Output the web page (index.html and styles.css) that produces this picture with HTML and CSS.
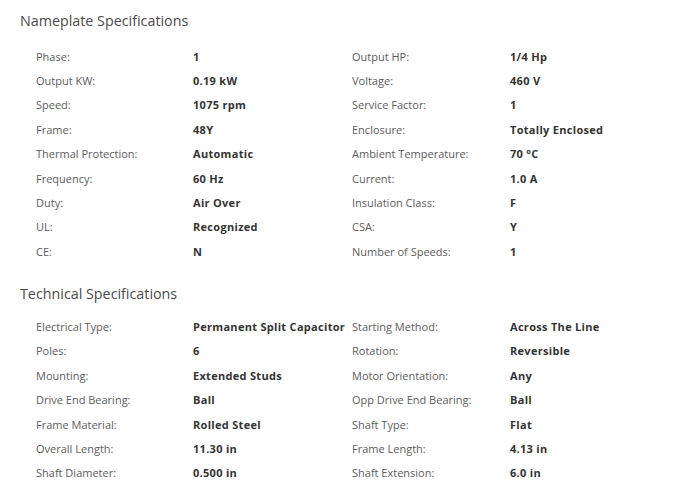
FILE: index.html
```html
<!DOCTYPE html>
<html>
<head>
<meta charset="utf-8">
<link rel="stylesheet" href="styles.css">
</head>
<body>
<div class="page">
  <section class="spec">
    <h2 class="spec-title">Nameplate Specifications</h2>
    <div class="spec-grid">
      <div class="lbl">Phase:</div><div class="val">1</div><div class="lbl">Output HP:</div><div class="val">1/4 Hp</div>
      <div class="lbl">Output KW:</div><div class="val">0.19 kW</div><div class="lbl">Voltage:</div><div class="val">460 V</div>
      <div class="lbl">Speed:</div><div class="val">1075 rpm</div><div class="lbl">Service Factor:</div><div class="val">1</div>
      <div class="lbl">Frame:</div><div class="val">48Y</div><div class="lbl">Enclosure:</div><div class="val">Totally Enclosed</div>
      <div class="lbl">Thermal Protection:</div><div class="val">Automatic</div><div class="lbl">Ambient Temperature:</div><div class="val">70 °C</div>
      <div class="lbl">Frequency:</div><div class="val">60 Hz</div><div class="lbl">Current:</div><div class="val">1.0 A</div>
      <div class="lbl">Duty:</div><div class="val">Air Over</div><div class="lbl">Insulation Class:</div><div class="val">F</div>
      <div class="lbl">UL:</div><div class="val">Recognized</div><div class="lbl">CSA:</div><div class="val">Y</div>
      <div class="lbl">CE:</div><div class="val">N</div><div class="lbl">Number of Speeds:</div><div class="val">1</div>
    </div>
  </section>
  <section class="spec">
    <h2 class="spec-title">Technical Specifications</h2>
    <div class="spec-grid">
      <div class="lbl">Electrical Type:</div><div class="val">Permanent Split Capacitor</div><div class="lbl">Starting Method:</div><div class="val">Across The Line</div>
      <div class="lbl">Poles:</div><div class="val">6</div><div class="lbl">Rotation:</div><div class="val">Reversible</div>
      <div class="lbl">Mounting:</div><div class="val">Extended Studs</div><div class="lbl">Motor Orientation:</div><div class="val">Any</div>
      <div class="lbl">Drive End Bearing:</div><div class="val">Ball</div><div class="lbl">Opp Drive End Bearing:</div><div class="val">Ball</div>
      <div class="lbl">Frame Material:</div><div class="val">Rolled Steel</div><div class="lbl">Shaft Type:</div><div class="val">Flat</div>
      <div class="lbl">Overall Length:</div><div class="val">11.30 in</div><div class="lbl">Frame Length:</div><div class="val">4.13 in</div>
      <div class="lbl">Shaft Diameter:</div><div class="val">0.500 in</div><div class="lbl">Shaft Extension:</div><div class="val">6.0 in</div>
    </div>
  </section>
</div>
</body>
</html>
```

FILE: styles.css
```css
html, body {
  margin: 0;
  padding: 0;
  background: #fff;
}
body {
  font-family: "Open Sans", "Lato", sans-serif;
}
.page {
  padding: 11px 0 0 20px;
}
.spec-title {
  margin: 0;
  font-size: 14.3px;
  font-weight: 400;
  color: #4a4a4a;
  line-height: 20px;
}
.spec-grid {
  display: grid;
  grid-template-columns: 157px 159px 158px auto;
  grid-auto-rows: 24.375px;
  align-items: center;
  padding: 13px 0 0 16px;
  font-size: 11px;
}
.spec + .spec {
  margin-top: 21px;
}
.spec + .spec .spec-grid {
  padding-top: 10px;
}
.lbl {
  color: #5c5c5c;
}
.val {
  color: #333;
  font-weight: 700;
  letter-spacing: 0.3px;
}
```
